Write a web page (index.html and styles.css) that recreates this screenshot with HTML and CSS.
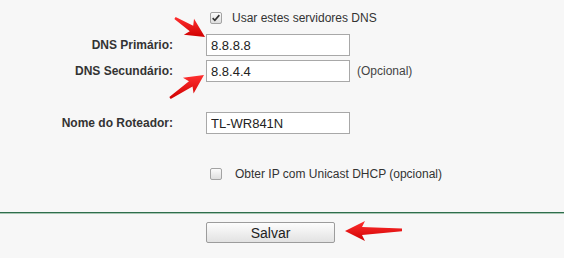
FILE: index.html
```html
<!DOCTYPE html>
<html lang="pt">
<head>
    <meta charset="UTF-8">
    <title>DNS</title>
    <link rel="stylesheet" href="styles.css">
</head>
<body>
    <div class="page">
        <form class="form">
            <div class="row row-top">
                <span></span>
                <label class="check-line">
                    <span class="check checked">
                        <svg viewBox="0 0 12 12" width="10" height="10"><path d="M2 6.2 L4.6 8.8 L10 2.6" fill="none" stroke="#333" stroke-width="2"/></svg>
                    </span>
                    <span class="check-text">Usar estes servidores DNS</span>
                </label>
            </div>
            <div class="row row-dns1">
                <span class="label">DNS Primário:</span>
                <div class="field"><input class="text" type="text" value="8.8.8.8"></div>
            </div>
            <div class="row row-dns2">
                <span class="label">DNS Secundário:</span>
                <div class="field"><input class="text" type="text" value="8.8.4.4"><span class="hint">(Opcional)</span></div>
            </div>
            <div class="row row-name">
                <span class="label">Nome do Roteador:</span>
                <div class="field"><input class="text" type="text" value="TL-WR841N"></div>
            </div>
            <div class="row row-dhcp">
                <span></span>
                <label class="check-line">
                    <span class="check"></span>
                    <span class="check-text wide">Obter IP com Unicast DHCP (opcional)</span>
                </label>
            </div>
            <div class="divider"></div>
            <div class="row row-btn">
                <span></span>
                <div class="field"><button type="button" class="btn">Salvar</button></div>
            </div>
        </form>

        <!-- setas vermelhas por cima -->
        <svg class="arrows" width="564" height="258" viewBox="0 0 564 258">
            <defs>
                <linearGradient id="red" x1="0" y1="0" x2="0" y2="1">
                    <stop offset="0" stop-color="#ff3030"/>
                    <stop offset="1" stop-color="#d00000"/>
                </linearGradient>
            </defs>
            <polygon fill="url(#red)" points="205,37 183.87,34.87 189.77,31.14 174.36,19.01 175.64,16.99 193.19,25.74 194.03,18.81"/>
            <polygon fill="url(#red)" points="204,75 193.59,93.51 192.54,86.61 170.67,98.99 169.33,97.01 188.96,81.31 182.95,77.77"/>
            <polygon fill="url(#red)" points="345,231 365,221 362,227 402,228.6 402,231.2 362,235 365,241"/>
        </svg>
    </div>
</body>
</html>
```

FILE: styles.css
```css
* { box-sizing: border-box; margin: 0; padding: 0; }
body { background: #f7f7f7; font-family: Arial, 'Liberation Sans', sans-serif; color: #333; font-size: 12px; }
.page { position: relative; width: 564px; height: 258px; overflow: hidden; }
.form { padding-top: 7px; }
.row { display: grid; grid-template-columns: 173px 1fr; column-gap: 33px; align-items: center; height: 22px; }
.row-top { margin-bottom: 5px; }
.row-dns1 { margin-bottom: 4px; }
.row-dns2 { margin-bottom: 30px; }
.row-name { margin-bottom: 29px; }
.label { text-align: right; font-weight: bold; color: #333; }
.field { display: flex; align-items: center; }
.text { width: 144px; height: 22px; border: 1px solid #a8a8a8; background: #fff; padding: 0 4px; font-family: Arial, 'Liberation Sans', sans-serif; font-size: 13px; color: #222; outline: none; }
.hint { margin-left: 7px; color: #444; }
.check-line { display: flex; align-items: center; margin-left: 4px; }
.check { width: 12px; height: 12px; border: 1px solid #a3a3a3; border-radius: 2px; background: linear-gradient(#fbfbfb, #dedede); display: flex; align-items: center; justify-content: center; }
.check-text { margin-left: 10px; color: #333; }
.check-text.wide { margin-left: 13px; }
.divider { margin-top: 27px; height: 2px; border-top: 1px solid #2e6e4c; background: #a9c6b4; }
.row-btn { margin-top: 8px; height: 21px; }
.btn { width: 129px; height: 21px; border: 1px solid #9c9c9c; border-radius: 2px; background: linear-gradient(#fdfdfd, #e2e2e2); font-family: Arial, 'Liberation Sans', sans-serif; font-size: 14px; color: #222; }
.arrows { position: absolute; top: 0; left: 0; pointer-events: none; }
```
